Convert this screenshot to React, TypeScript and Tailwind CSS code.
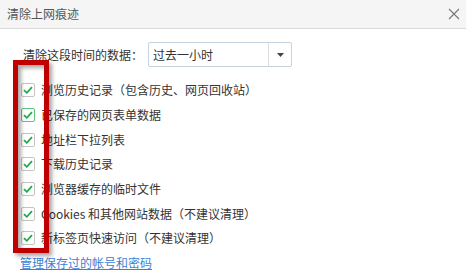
import React from 'react';

const items = [
  '浏览历史记录（包含历史、网页回收站）',
  '已保存的网页表单数据',
  '地址栏下拉列表',
  '下载历史记录',
  '浏览器缓存的临时文件',
  'Cookies 和其他网站数据（不建议清理）',
  '新标签页快速访问（不建议清理）',
];

const Check: React.FC<{ active?: boolean }> = ({ active }) => (
  <span
    className={`flex h-[14px] w-[14px] shrink-0 items-center justify-center rounded-[2px] border bg-white ${
      active ? 'border-[#5cc27c]' : 'border-[#c4c4c4]'
    }`}
  >
    <svg width="10" height="8" viewBox="0 0 10 8" fill="none">
      <path d="M1 4.2 L3.8 6.8 L9 1.2" stroke="#1fae4b" strokeWidth="1.8" />
    </svg>
  </span>
);

export default function App() {
  return (
    <div
      className="relative h-[278px] w-[466px] overflow-hidden bg-white text-[12px] text-[#333]"
      style={{ fontFamily: '"Noto Sans CJK SC", "Noto Sans", sans-serif' }}
    >
      <div className="flex h-[29px] items-center justify-between border-b border-[#dadada] bg-[#f5f5f5] pl-[7px] pr-[5px] text-[#555]">
        <span>清除上网痕迹</span>
        <svg width="12" height="12" viewBox="0 0 12 12" className="mr-[1px]">
          <path d="M1 1 L11 11 M11 1 L1 11" stroke="#777" strokeWidth="1.1" />
        </svg>
      </div>

      <div className="mt-[13px] flex h-[25px] items-center pl-[23px]">
        <span className="w-[125px]">清除这段时间的数据：</span>
        <div className="flex h-[25px] w-[144px] items-stretch rounded-[2px] border border-[#c6d3e0]">
          <span className="flex flex-1 items-center pl-[4px] text-[#333]">过去一小时</span>
          <span className="flex w-[23px] items-center justify-center border-l border-[#dcdcdc]">
            <svg width="7" height="4" viewBox="0 0 7 4">
              <path d="M0 0 L7 0 L3.5 4 Z" fill="#444" />
            </svg>
          </span>
        </div>
      </div>

      <div className="mt-[11px] flex flex-col pl-[21px]">
        {items.map((t, i) => (
          <div key={t} className="flex h-[24.67px] items-center gap-[6px]">
            <Check active={i === 1} />
            <span>{t}</span>
          </div>
        ))}
        <a className="-ml-[1px] flex h-[24px] items-center text-[#3c7fd6] underline" href="#">
          管理保存过的帐号和密码
        </a>
      </div>

      <div className="pointer-events-none absolute left-[13px] top-[60px] h-[193px] w-[36px] border-[5px] border-[#c00000] shadow-[3px_3px_4px_rgba(0,0,0,0.35),inset_3px_3px_4px_rgba(0,0,0,0.35)]" />
    </div>
  );
}
